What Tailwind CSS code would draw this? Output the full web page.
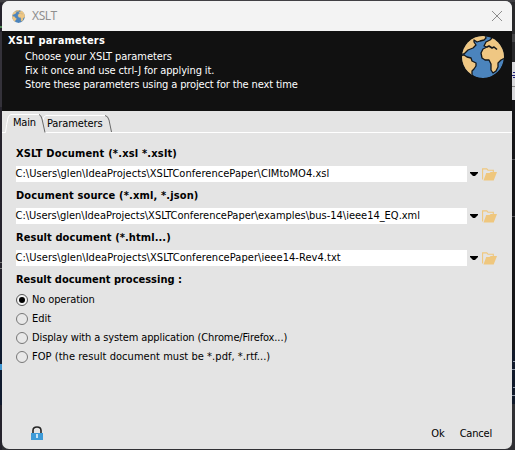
<!DOCTYPE html>
<html lang="en">
<head>
<meta charset="utf-8">
<title>XSLT</title>
<script src="https://cdn.jsdelivr.net/npm/@tailwindcss/browser@4"></script>
</head>
<body class="relative h-[450px] w-[515px] overflow-hidden bg-[#303034] pl-[2px] pt-px font-['DejaVu_Sans_Condensed','DejaVu_Sans',sans-serif] text-[11px] leading-[14px] text-black">
<!-- desktop visible around the dialog -->
<svg class="absolute left-0 top-0" width="515" height="450" shape-rendering="crispEdges">
  <rect width="515" height="2" fill="#414044"/>
  <rect y="3" width="2" height="447" fill="#25232c"/><rect y="26" width="2" height="2" fill="#4f8b55"/><rect y="32" width="2" height="75" fill="#34323a"/>
  <rect y="262" width="2" height="1" fill="#777"/><rect y="268" width="2" height="1" fill="#777"/><rect y="300" width="2" height="105" fill="#101a2e"/><rect y="364" width="2" height="6" fill="#3f96d2"/>
  <rect x="512" y="2" width="3" height="60" fill="#29292b"/><rect x="512" y="34" width="3" height="8" fill="#454547"/>
  <rect x="512" y="62" width="3" height="38" fill="#d9d9dc"/><path d="M513 72h2M512 75h3M513 77h2" stroke="#22227c"/><rect x="512" y="86" width="3" height="1" fill="#888"/>
  <rect x="512" y="100" width="3" height="250" fill="#151518"/><rect x="512" y="159" width="3" height="1" fill="#55555a"/><rect x="512" y="216" width="3" height="1" fill="#55555a"/>
  <rect x="512" y="350" width="3" height="54" fill="#111a2b"/><path d="M513 361h2M512 369h3M513 387h2M512 395h3" stroke="#8e98a8"/>
</svg>
<svg width="0" height="0" class="absolute">
  <defs>
    <symbol id="globe" viewBox="0 0 42 42">
      <clipPath id="disc"><circle cx="21" cy="21" r="21"/></clipPath>
      <g clip-path="url(#disc)">
        <circle cx="21" cy="21" r="21" fill="#4b84bd"/>
        <g fill="#efc783" stroke="currentColor" stroke-width="1.3" stroke-linejoin="round">
          <path d="M-1 18 2 18 6 14 11 12 14 9 12 6 12 4 15 6 18 5 22 4 24 2 23-1H8L-1 8Z"/>
          <path d="M-1 20 2 19 5 21 9 22 10 25 14 27 14 30 12 33 10 35 10 40 3 36-1 28Z"/>
          <path d="M31 1 28 4 24 6 22 10 25 11 21 13 19 17 20 22 23 24 27 24 29 28 29 34 31 37 34 35 36 31 36 27 39 24 43 22V12L36 4Z"/>
          <path d="M25 11 27 10 30 12 32 11 35 13.500" fill="none" stroke-width="1.6"/>
        </g>
      </g>
    </symbol>
    <symbol id="folder" viewBox="0 0 15 13">
      <path d="M.6 11.5V.9H4.8L6 2.3H11.3V4.5" fill="none" stroke="#efc77e" stroke-width="1.1"/>
      <path d="M4.2 5H7.5L8.7 4H15L11.7 12.4H1.5Z" fill="#efc77e"/>
    </symbol>
    <symbol id="down" viewBox="0 0 8 5"><path d="M0 0H8V1L5 4H3L0 1Z" fill="#000"/></symbol>
  </defs>
</svg>

<main class="relative flex h-[448px] w-[510px] flex-col overflow-hidden rounded-[7px] bg-[#e4e4e4]">
  <header class="flex h-[30px] shrink-0 items-center bg-[#f3f3f3] pl-[10px] pr-[10px]">
    <svg class="size-[13px] text-[#a5a79c]"><use href="#globe"/></svg>
    <h1 class="ml-[7px] font-['Noto_Sans','Open_Sans',sans-serif] text-[12px] tracking-[-0.4px] text-[#8f8f8f]">XSLT</h1>
    <svg class="ml-auto" width="10" height="10" viewBox="0 0 10 10"><path d="M0 0 10 10M10 0 0 10" stroke="#8c8c8c" stroke-width="1"/></svg>
  </header>

  <section class="flex h-[80px] shrink-0 justify-between bg-[#111] pl-[6px] pr-[8px] pt-[3px] text-white">
    <div>
      <h2 class="font-bold tracking-[0.2px]">XSLT parameters</h2>
      <div class="pl-[17px] pt-[2px] whitespace-nowrap">
        <p class="tracking-[-0.07px]">Choose your XSLT parameters</p>
        <p class="tracking-[-0.12px]">Fix it once and use ctrl-J for applying it.</p>
        <p class="tracking-[-0.14px]">Store these parameters using a project for the next time</p>
      </div>
    </div>
    <svg class="mt-[2px] size-[42px] text-[#14171a]"><use href="#globe"/></svg>
  </section>

  <nav class="relative h-[22px] shrink-0 pl-[11px]">
    <svg class="absolute left-0 top-0" width="510" height="22" fill="none">
      <path d="M0 21.5H3.5Q4.500 13 6 7Q7 3.500 9 3.500H37M43 21.500H510M41 9Q42 4.500 44 4.500H103" stroke="#fff"/>
      <path d="M37 3.500Q39 4 40 8L43 21.500M103 4.500Q106 5 107 9L109.500 21" stroke="#686868"/>
    </svg>
    <div class="relative flex">
      <span class="w-[34px] pt-[5px] tracking-[-0.2px]">Main</span>
      <span class="pt-[6px] tracking-[-0.1px]">Parameters</span>
    </div>
  </nav>

  <form class="flex flex-1 flex-col pl-[14px] pr-[15px] pt-[14px] whitespace-nowrap">
    <label class="font-bold tracking-[0.18px]">XSLT Document (*.xsl *.xslt)</label>
    <div class="mt-[5px] flex h-[16px] items-center">
      <span class="h-[16px] w-[451px] bg-white indent-[-0.5px] leading-[16px] tracking-[0.045px]">C:\Users\glen\IdeaProjects\XSLTConferencePaper\CIMtoMO4.xsl</span>
      <svg class="ml-[3px] h-[5px] w-[8px]"><use href="#down"/></svg>
      <svg class="ml-[4px] h-[13px] w-[15px]"><use href="#folder"/></svg>
    </div>
    <label class="mt-[7px] font-bold tracking-[0.14px]">Document source (*.xml, *.json)</label>
    <div class="mt-[5px] flex h-[16px] items-center">
      <span class="h-[16px] w-[451px] bg-white indent-[-0.5px] leading-[16px] tracking-[-0.015px]">C:\Users\glen\IdeaProjects\XSLTConferencePaper\examples\bus-14\ieee14_EQ.xml</span>
      <svg class="ml-[3px] h-[5px] w-[8px]"><use href="#down"/></svg>
      <svg class="ml-[4px] h-[13px] w-[15px]"><use href="#folder"/></svg>
    </div>
    <label class="mt-[7px] font-bold tracking-[0.08px]">Result document (*.html...)</label>
    <div class="mt-[5px] flex h-[16px] items-center">
      <span class="h-[16px] w-[451px] bg-white indent-[-0.5px] leading-[16px] tracking-[0.055px]">C:\Users\glen\IdeaProjects\XSLTConferencePaper\ieee14-Rev4.txt</span>
      <svg class="ml-[3px] h-[5px] w-[8px]"><use href="#down"/></svg>
      <svg class="ml-[4px] h-[13px] w-[15px]"><use href="#folder"/></svg>
    </div>
    <p class="mt-[7px] font-bold">Result document processing :</p>
    <div class="mt-[3px] flex flex-col">
      <div class="flex h-[19px] items-center gap-[4px]"><span class="flex size-[12px] items-center justify-center rounded-full border border-[#555] bg-[#f4f4f4]"><i class="size-[6px] rounded-full bg-black"></i></span><span class="tracking-[-0.12px]">No operation</span></div>
      <div class="flex h-[19px] items-center gap-[4px]"><span class="size-[12px] rounded-full border border-[#777] bg-[#e8e8e8]"></span><span>Edit</span></div>
      <div class="flex h-[19px] items-center gap-[4px]"><span class="size-[12px] rounded-full border border-[#777] bg-[#e8e8e8]"></span><span class="tracking-[-0.12px]">Display with a system application (Chrome/Firefox...)</span></div>
      <div class="flex h-[19px] items-center gap-[4px]"><span class="size-[12px] rounded-full border border-[#777] bg-[#e8e8e8]"></span><span class="tracking-[0.045px]">FOP (the result document must be *.pdf, *.rtf...)</span></div>
    </div>
    <footer class="mt-auto flex h-[32px] items-center pl-[15px] pr-[5px] pt-px">
      <svg class="-mt-[2px]" width="12" height="14" viewBox="0 0 12 14"><path d="M2 7V4.500Q2 1 6 1T10 4.500V7" fill="none" stroke="#252525" stroke-width="1.600"/><rect y="7" width="12" height="7" fill="#3d9bd9"/><path d="M5 8H7V12H5Z" fill="#c8e5f6"/></svg>
      <span class="ml-auto">Ok</span>
      <span class="ml-[15px] tracking-[-0.2px]">Cancel</span>
    </footer>
  </form>
</main>
</body>
</html>
